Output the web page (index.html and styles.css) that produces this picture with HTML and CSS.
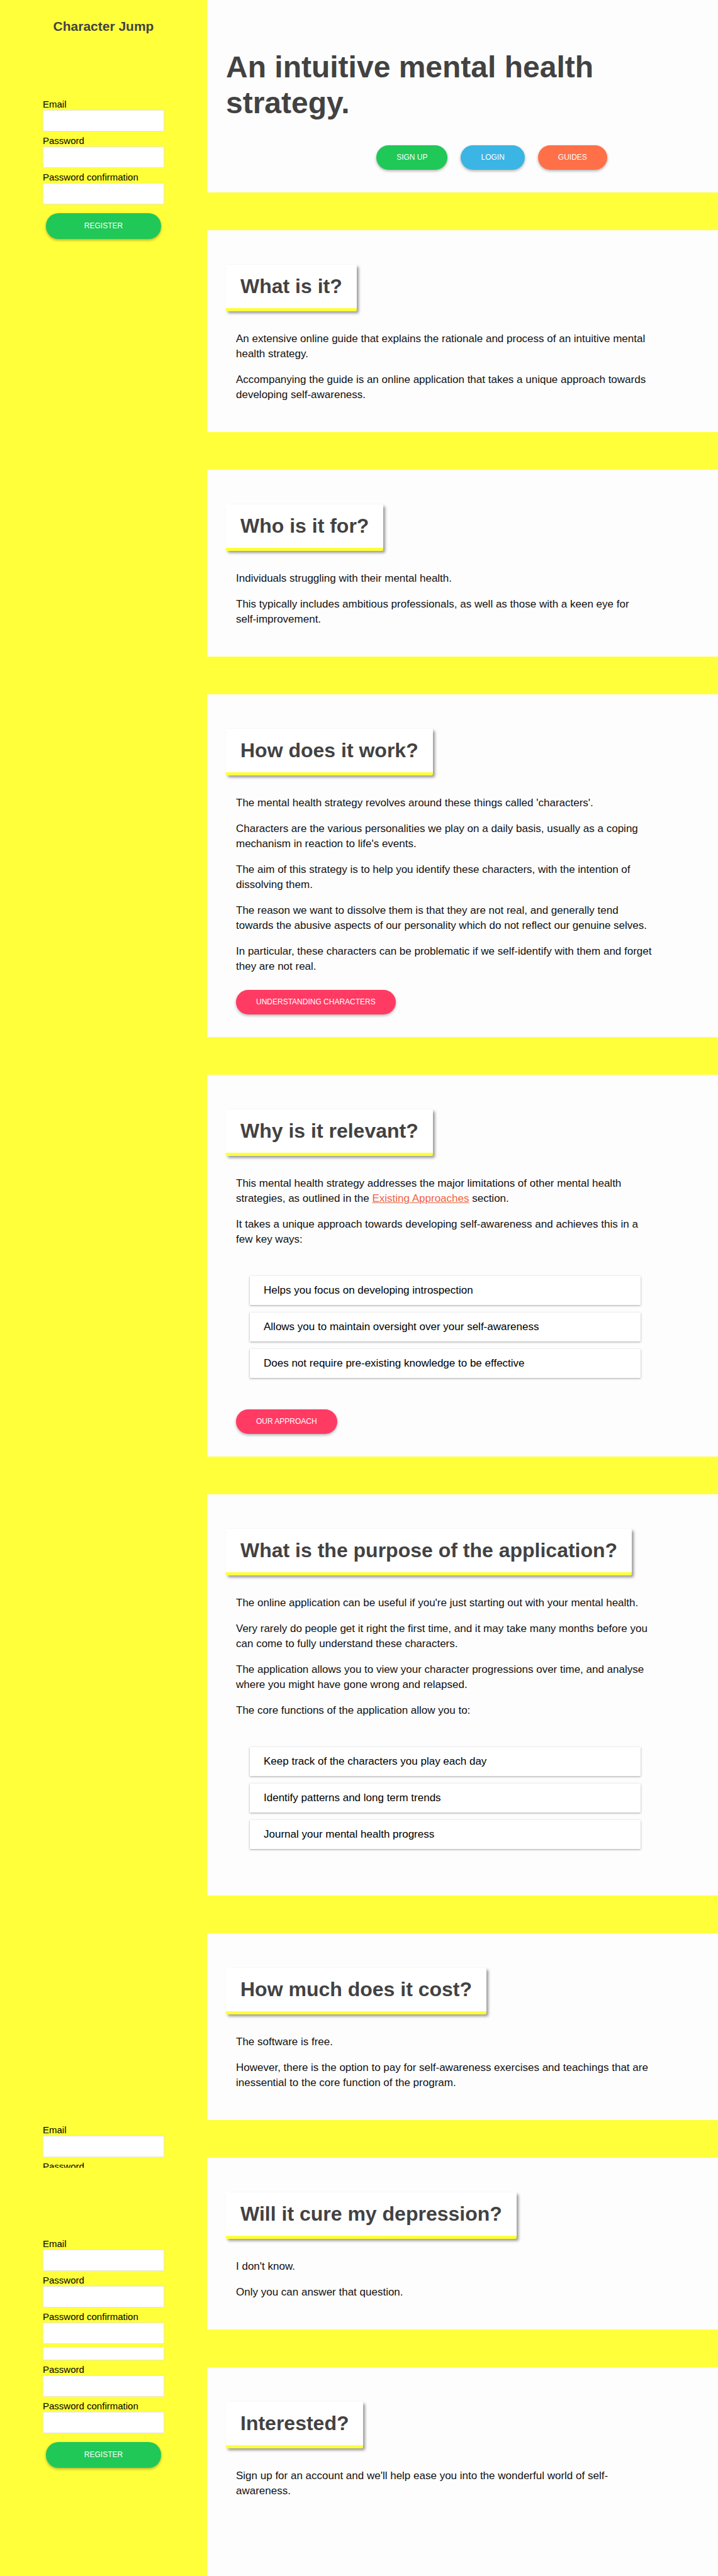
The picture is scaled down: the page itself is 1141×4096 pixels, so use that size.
FILE: index.html
```html
<!DOCTYPE html>
<html lang="en">
<head>
<meta charset="utf-8">
<meta name="viewport" content="width=device-width, initial-scale=1">
<title>Character Jump</title>
<link rel="stylesheet" href="styles.css">
</head>
<body>
<div class="layout">
  <aside class="sidebar">
    <p class="brand">Character Jump</p>
    <form class="form">
      <div class="field"><label for="email">Email</label><input id="email" type="email"></div>
      <div class="field"><label for="password">Password</label><input id="password" type="password"></div>
      <div class="field"><label for="confirm">Password confirmation</label><input id="confirm" type="password"></div>
      <button class="btn btn-green btn-register" type="submit">Register</button>
    </form>

    <div class="repeats">
      <form class="form form-cut">
        <div class="field"><label for="email-2">Email</label><input id="email-2" type="email"></div>
        <div class="field"><label for="password-2">Password</label><input id="password-2" type="password"></div>
      </form>
      <form class="form form-short">
        <div class="field"><label for="email-3">Email</label><input id="email-3" type="email"></div>
        <div class="field"><label for="password-3">Password</label><input id="password-3" type="password"></div>
        <div class="field"><label for="confirm-3">Password confirmation</label><input id="confirm-3" type="password"></div>
      </form>
      <form class="form">
        <div class="field field-cut"><input type="email" aria-label="Email"></div>
        <div class="field"><label for="password-4">Password</label><input id="password-4" type="password"></div>
        <div class="field"><label for="confirm-4">Password confirmation</label><input id="confirm-4" type="password"></div>
        <button class="btn btn-green btn-register" type="submit">Register</button>
      </form>
    </div>
  </aside>

  <main class="main">
    <header class="hero">
      <h1>An intuitive mental health strategy.</h1>
      <nav class="hero-nav">
        <a class="btn btn-green" href="#signup">Sign up</a>
        <a class="btn btn-blue" href="#login">Login</a>
        <a class="btn btn-coral" href="#guides">Guides</a>
      </nav>
    </header>

    <section class="panel">
      <h2>What is it?</h2>
      <div class="prose">
        <p>An extensive online guide that explains the rationale and process of an intuitive mental health strategy.</p>
        <p>Accompanying the guide is an online application that takes a unique approach towards developing self-awareness.</p>
      </div>
    </section>

    <section class="panel">
      <h2>Who is it for?</h2>
      <div class="prose">
        <p>Individuals struggling with their mental health.</p>
        <p>This typically includes ambitious professionals, as well as those with a keen eye for <span class="nowrap">self-improvement.</span></p>
      </div>
    </section>

    <section class="panel panel-action">
      <h2>How does it work?</h2>
      <div class="prose">
        <p>The mental health strategy revolves around these things called 'characters'.</p>
        <p>Characters are the various personalities we play on a daily basis, usually as a coping mechanism in reaction to life's events.</p>
        <p>The aim of this strategy is to help you identify these characters, with the intention of dissolving them.</p>
        <p>The reason we want to dissolve them is that they are not real, and generally tend towards the abusive aspects of our personality which do not reflect our genuine selves.</p>
        <p>In particular, these characters can be problematic if we self-identify with them and forget they are not real.</p>
        <a class="btn btn-pink" href="#characters">Understanding characters</a>
      </div>
    </section>

    <section class="panel panel-action">
      <h2>Why is it relevant?</h2>
      <div class="prose">
        <p>This mental health strategy addresses the major limitations of other mental health strategies, as outlined in the <a class="link" href="#approaches">Existing Approaches</a> section.</p>
        <p>It takes a unique approach towards developing self-awareness and achieves this in a few key ways:</p>
        <ul class="cards">
          <li>Helps you focus on developing introspection</li>
          <li>Allows you to maintain oversight over your self-awareness</li>
          <li>Does not require pre-existing knowledge to be effective</li>
        </ul>
        <a class="btn btn-pink" href="#approach">Our approach</a>
      </div>
    </section>

    <section class="panel">
      <h2>What is the purpose of the application?</h2>
      <div class="prose">
        <p>The online application can be useful if you're just starting out with your mental health.</p>
        <p>Very rarely do people get it right the first time, and it may take many months before you can come to fully understand these characters.</p>
        <p>The application allows you to view your character progressions over time, and analyse where you might have gone wrong and relapsed.</p>
        <p>The core functions of the application allow you to:</p>
        <ul class="cards">
          <li>Keep track of the characters you play each day</li>
          <li>Identify patterns and long term trends</li>
          <li>Journal your mental health progress</li>
        </ul>
      </div>
    </section>

    <section class="panel">
      <h2>How much does it cost?</h2>
      <div class="prose">
        <p>The software is free.</p>
        <p>However, there is the option to pay for self-awareness exercises and teachings that are inessential to the core function of the program.</p>
      </div>
    </section>

    <section class="panel">
      <h2>Will it cure my depression?</h2>
      <div class="prose">
        <p>I don't know.</p>
        <p>Only you can answer that question.</p>
      </div>
    </section>

    <section class="panel panel-last">
      <h2>Interested?</h2>
      <div class="prose">
        <p>Sign up for an account and we'll help ease you into the wonderful world of self-awareness.</p>
      </div>
    </section>
  </main>
</div>
</body>
</html>
```

FILE: styles.css
```css
:root {
  --yellow: #ffff3a;
  --paper: #fdfdfd;
  --heading: #424242;
}

* {
  box-sizing: border-box;
}

body {
  margin: 0;
  background: var(--yellow);
  color: #111;
  font: 17px/24px "Liberation Sans", Arial, Helvetica, sans-serif;
}

h1,
h2,
p,
ul {
  margin: 0;
}

.layout {
  display: grid;
  grid-template-columns: 329px 1fr;
  min-height: 100vh;
}

/* Sidebar */

.sidebar {
  display: flex;
  flex-direction: column;
  padding: 30px 68px 172px;
}

.brand {
  margin-bottom: 103px;
  color: var(--heading);
  font-size: 21px;
  font-weight: bold;
  text-align: center;
}

.form {
  display: flex;
  flex-direction: column;
}

.field {
  display: flex;
  flex-direction: column;
  margin-bottom: 6px;
}

.field label {
  color: #000;
  font-size: 15px;
  line-height: 18px;
}

.field input {
  flex: none;
  width: 100%;
  height: 34px;
  padding: 0 8px;
  border: 1px solid #e6e6d8;
  background: #fff;
  font: inherit;
}

.repeats {
  display: flex;
  flex-direction: column;
  margin-top: auto;
}

.form-cut {
  height: 69px;
  margin-bottom: 112px;
  overflow: hidden;
}

.form-short {
  height: 173px;
  overflow: hidden;
}

.field-cut {
  justify-content: flex-end;
  height: 21px;
  overflow: hidden;
}

/* Buttons */

.btn {
  display: inline-block;
  padding: 0 32px;
  border: 0;
  border-radius: 20px;
  box-shadow: 0 2px 4px rgba(0, 0, 0, 0.3);
  color: #fff;
  font: 12px/39px "Liberation Sans", Arial, Helvetica, sans-serif;
  text-align: center;
  text-decoration: none;
  text-transform: uppercase;
}

.btn-green {
  background: #20c858;
}

.btn-blue {
  background: #3bb5e4;
}

.btn-coral {
  background: #ff7048;
}

.btn-pink {
  background: #ff3b64;
}

.btn-register {
  margin: 8px 5px 0;
  line-height: 41px;
}

/* Main column */

.main {
  display: flex;
  flex-direction: column;
  gap: 60px;
}

.hero {
  padding: 78px 30px 36px;
  background: var(--paper);
}

.hero h1 {
  color: var(--heading);
  font-size: 48px;
  line-height: 57px;
}

.hero-nav {
  display: flex;
  justify-content: center;
  gap: 21px;
  margin-top: 39px;
  padding-left: 93px;
}

.panel {
  padding: 55px 101px 47px 30px;
  background: var(--paper);
}

.panel-action {
  padding-bottom: 36px;
}

.panel-last {
  flex: 1;
}

.panel h2 {
  width: max-content;
  max-width: 100%;
  margin-bottom: 32px;
  padding: 16px 23px;
  border-bottom: 5px solid var(--yellow);
  border-radius: 2px;
  background: #fff;
  box-shadow: 3px 3px 4px rgba(0, 0, 0, 0.4);
  color: var(--heading);
  font-size: 32px;
  line-height: 37px;
}

.prose {
  padding-left: 16px;
}

.prose p + p {
  margin-top: 17px;
}

.prose .btn {
  display: block;
  width: max-content;
  margin-top: 25px;
}

.prose .cards + .btn {
  margin-top: 50px;
}

.nowrap {
  white-space: nowrap;
}

.link {
  color: #f0633f;
}

.cards {
  display: flex;
  flex-direction: column;
  gap: 12px;
  margin: 46px 22px 27px;
  padding: 0;
  list-style: none;
}

.cards li {
  padding: 11px 22px;
  background: #fff;
  box-shadow: 0 1px 3px rgba(0, 0, 0, 0.35);
  color: #000;
}
```
